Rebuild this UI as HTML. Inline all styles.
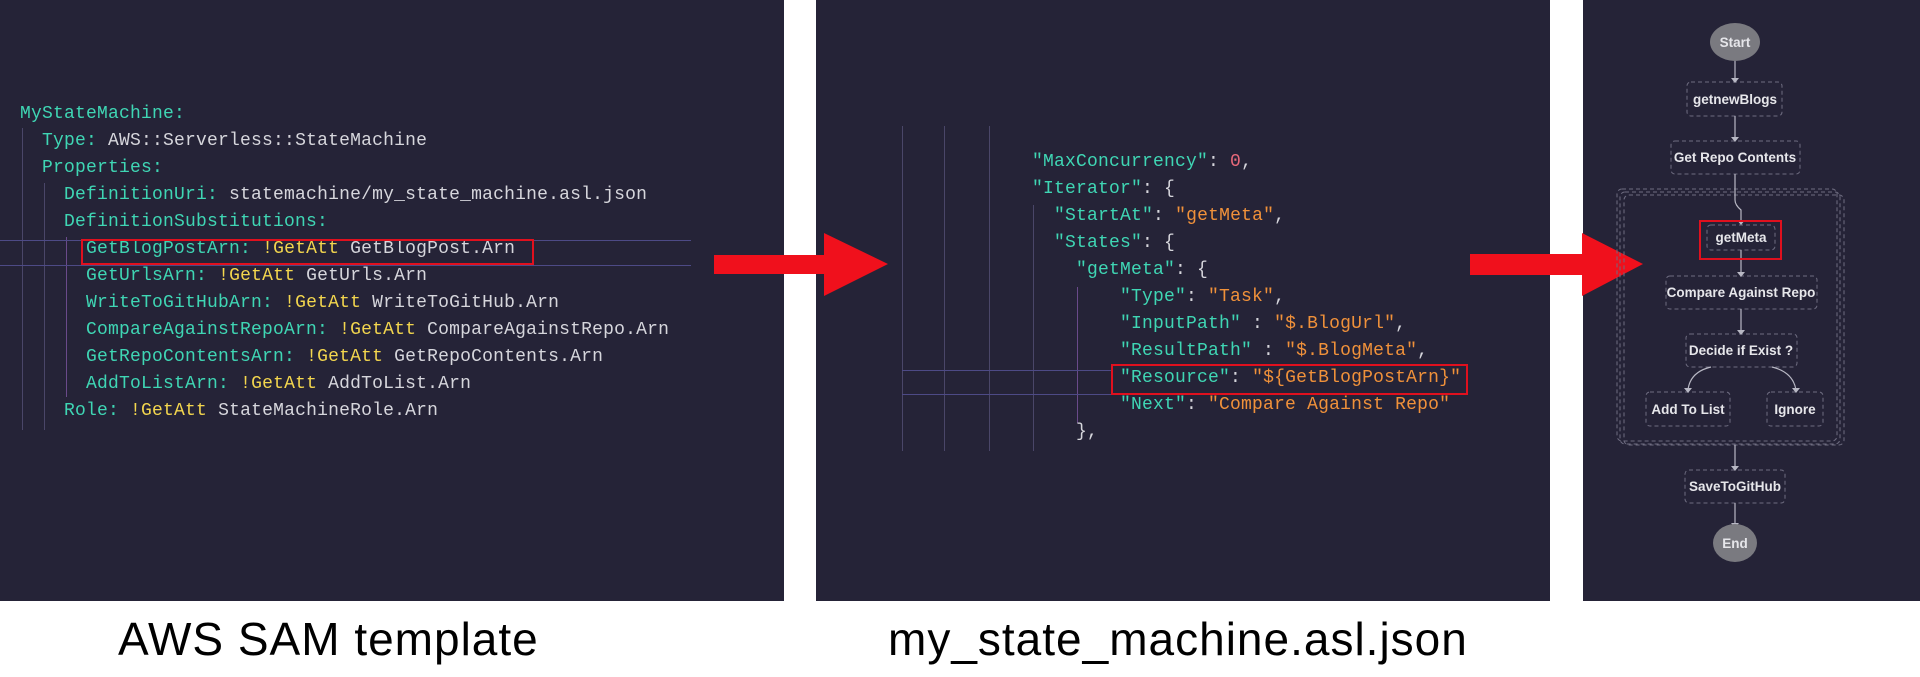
<!DOCTYPE html>
<html><head><meta charset="utf-8"><style>
*{margin:0;padding:0;box-sizing:border-box}
body{width:1920px;height:677px;background:#fff;position:relative;overflow:hidden;font-family:"Liberation Mono",monospace}
.p{position:absolute;background:#252337}
.l{position:absolute;font-size:18px;line-height:27px;white-space:pre;color:#d6d6dc;letter-spacing:0.2px}
.k{color:#3fd6b4}.y{color:#f3d64e}.o{color:#f0913a}.r{color:#e8697a}
.v{position:absolute;width:1px;background:#4a4668}
.h{position:absolute;height:1px;background:#4d4a86}
.box{position:absolute;border:2px solid #e0101e}
.cap{position:absolute;font-family:"Liberation Sans",sans-serif;font-size:46px;color:#000;top:612px;letter-spacing:1px}
</style></head><body>
<div class="p" style="left:0;top:0;width:784px;height:601px"></div>
<div class="p" style="left:816px;top:0;width:734px;height:601px"></div>
<div class="p" style="left:1583px;top:0;width:337px;height:601px"></div>

<!-- panel 1 -->
<div class="v" style="left:22px;top:128px;height:302px"></div>
<div class="v" style="left:44px;top:183px;height:247px"></div>
<div class="v" style="left:66px;top:237px;height:160px;background:#6a4a8a"></div>
<div class="h" style="left:0;top:240px;width:691px"></div>
<div class="h" style="left:0;top:265px;width:691px"></div>
<div class="l" style="left:20px;top:101px"><span class="k">MyStateMachine:</span>
  <span class="k">Type:</span> AWS::Serverless::StateMachine
  <span class="k">Properties:</span>
    <span class="k">DefinitionUri:</span> statemachine/my_state_machine.asl.json
    <span class="k">DefinitionSubstitutions:</span>
      <span class="k">GetBlogPostArn:</span> <span class="y">!GetAtt</span> GetBlogPost.Arn
      <span class="k">GetUrlsArn:</span> <span class="y">!GetAtt</span> GetUrls.Arn
      <span class="k">WriteToGitHubArn:</span> <span class="y">!GetAtt</span> WriteToGitHub.Arn
      <span class="k">CompareAgainstRepoArn:</span> <span class="y">!GetAtt</span> CompareAgainstRepo.Arn
      <span class="k">GetRepoContentsArn:</span> <span class="y">!GetAtt</span> GetRepoContents.Arn
      <span class="k">AddToListArn:</span> <span class="y">!GetAtt</span> AddToList.Arn
    <span class="k">Role:</span> <span class="y">!GetAtt</span> StateMachineRole.Arn</div>
<div class="box" style="left:81px;top:239px;width:453px;height:26px"></div>

<!-- panel 2 -->
<div class="v" style="left:902px;top:126px;height:325px"></div>
<div class="v" style="left:944px;top:126px;height:325px"></div>
<div class="v" style="left:989px;top:126px;height:325px"></div>
<div class="v" style="left:1033px;top:205px;height:246px"></div>
<div class="v" style="left:1077px;top:287px;height:136px;background:#6a4a8a"></div>
<div class="h" style="left:902px;top:370px;width:210px"></div>
<div class="h" style="left:902px;top:394px;width:210px"></div>
<div class="l" style="left:1032px;top:149px"><span class="k">"MaxConcurrency"</span>: <span class="r">0</span>,
<span class="k">"Iterator"</span>: {
  <span class="k">"StartAt"</span>: <span class="o">"getMeta"</span>,
  <span class="k">"States"</span>: {
    <span class="k">"getMeta"</span>: {
        <span class="k">"Type"</span>: <span class="o">"Task"</span>,
        <span class="k">"InputPath"</span> : <span class="o">"$.BlogUrl"</span>,
        <span class="k">"ResultPath"</span> : <span class="o">"$.BlogMeta"</span>,
        <span class="k">"Resource"</span>: <span class="o">"${GetBlogPostArn}"</span>
        <span class="k">"Next"</span>: <span class="o">"Compare Against Repo"</span>
    },</div>
<div class="box" style="left:1111px;top:364px;width:357px;height:31px"></div>

<!-- arrows -->
<svg style="position:absolute;left:0;top:0" width="1920" height="677">
<polygon fill="#f0101c" points="714,255 824,255 824,233 888,264 824,296 824,274 714,274"/>
<polygon fill="#f0101c" points="1470,254 1582,254 1582,233 1643,264 1582,296 1582,275 1470,275"/>
<g font-family="Liberation Sans,sans-serif" font-size="13.5" font-weight="bold" fill="#e6e6ea" text-anchor="middle" stroke-dasharray="4,3">
<g fill="none" stroke="#6e6c80" stroke-width="1">
<rect x="1617" y="189" width="220" height="252" rx="5"/>
<rect x="1620" y="192" width="220" height="252" rx="5"/>
<rect x="1624" y="195" width="220" height="250" rx="5"/>
<rect x="1687" y="82" width="95" height="34" rx="4"/>
<rect x="1671" y="141" width="129" height="33" rx="4"/>
<rect x="1707" y="225" width="68" height="25" rx="4"/>
<rect x="1666" y="276" width="151" height="33" rx="4"/>
<rect x="1686" y="334" width="111" height="33" rx="4"/>
<rect x="1646" y="392" width="84" height="34" rx="4"/>
<rect x="1767" y="392" width="56" height="34" rx="4"/>
<rect x="1685" y="470" width="100" height="33" rx="4"/>
</g>
<g stroke="#b8b8c4" stroke-width="1.2" fill="none" stroke-dasharray="none">
<path d="M1735 60V80M1735 116V139M1735 174V200Q1735 205 1741 210V222M1741 250V274M1741 309V332M1711 367Q1690 372 1688 390M1772 367Q1793 372 1796 390M1735 445V468M1735 503V525"/>
</g>
<g fill="#b8b8c4" stroke="none">
<polygon points="1731,78 1739,78 1735,83"/><polygon points="1731,137 1739,137 1735,142"/>
<polygon points="1737,220 1745,220 1741,225"/><polygon points="1737,272 1745,272 1741,277"/>
<polygon points="1737,330 1745,330 1741,335"/><polygon points="1684,388 1692,388 1688,393"/>
<polygon points="1792,388 1800,388 1796,393"/><polygon points="1731,466 1739,466 1735,471"/>
<polygon points="1731,523 1739,523 1735,528"/>
</g>
<ellipse cx="1735" cy="42" rx="25" ry="19" fill="#7a7a80" stroke="none"/>
<ellipse cx="1735" cy="543" rx="22" ry="19" fill="#7a7a80" stroke="none"/>
<g stroke="none">
<text x="1735" y="47">Start</text>
<text x="1735" y="104">getnewBlogs</text>
<text x="1735" y="162">Get Repo Contents</text>
<text x="1741" y="242">getMeta</text>
<text x="1741" y="297">Compare Against Repo</text>
<text x="1741" y="355">Decide if Exist ?</text>
<text x="1688" y="414">Add To List</text>
<text x="1795" y="414">Ignore</text>
<text x="1735" y="491">SaveToGitHub</text>
<text x="1735" y="548">End</text>
</g>
</g>
<rect x="1700" y="221" width="81" height="38" fill="none" stroke="#e0101e" stroke-width="2"/>
</svg>

<div class="cap" style="left:118px">AWS SAM template</div>
<div class="cap" style="left:888px">my_state_machine.asl.json</div>
</body></html>
